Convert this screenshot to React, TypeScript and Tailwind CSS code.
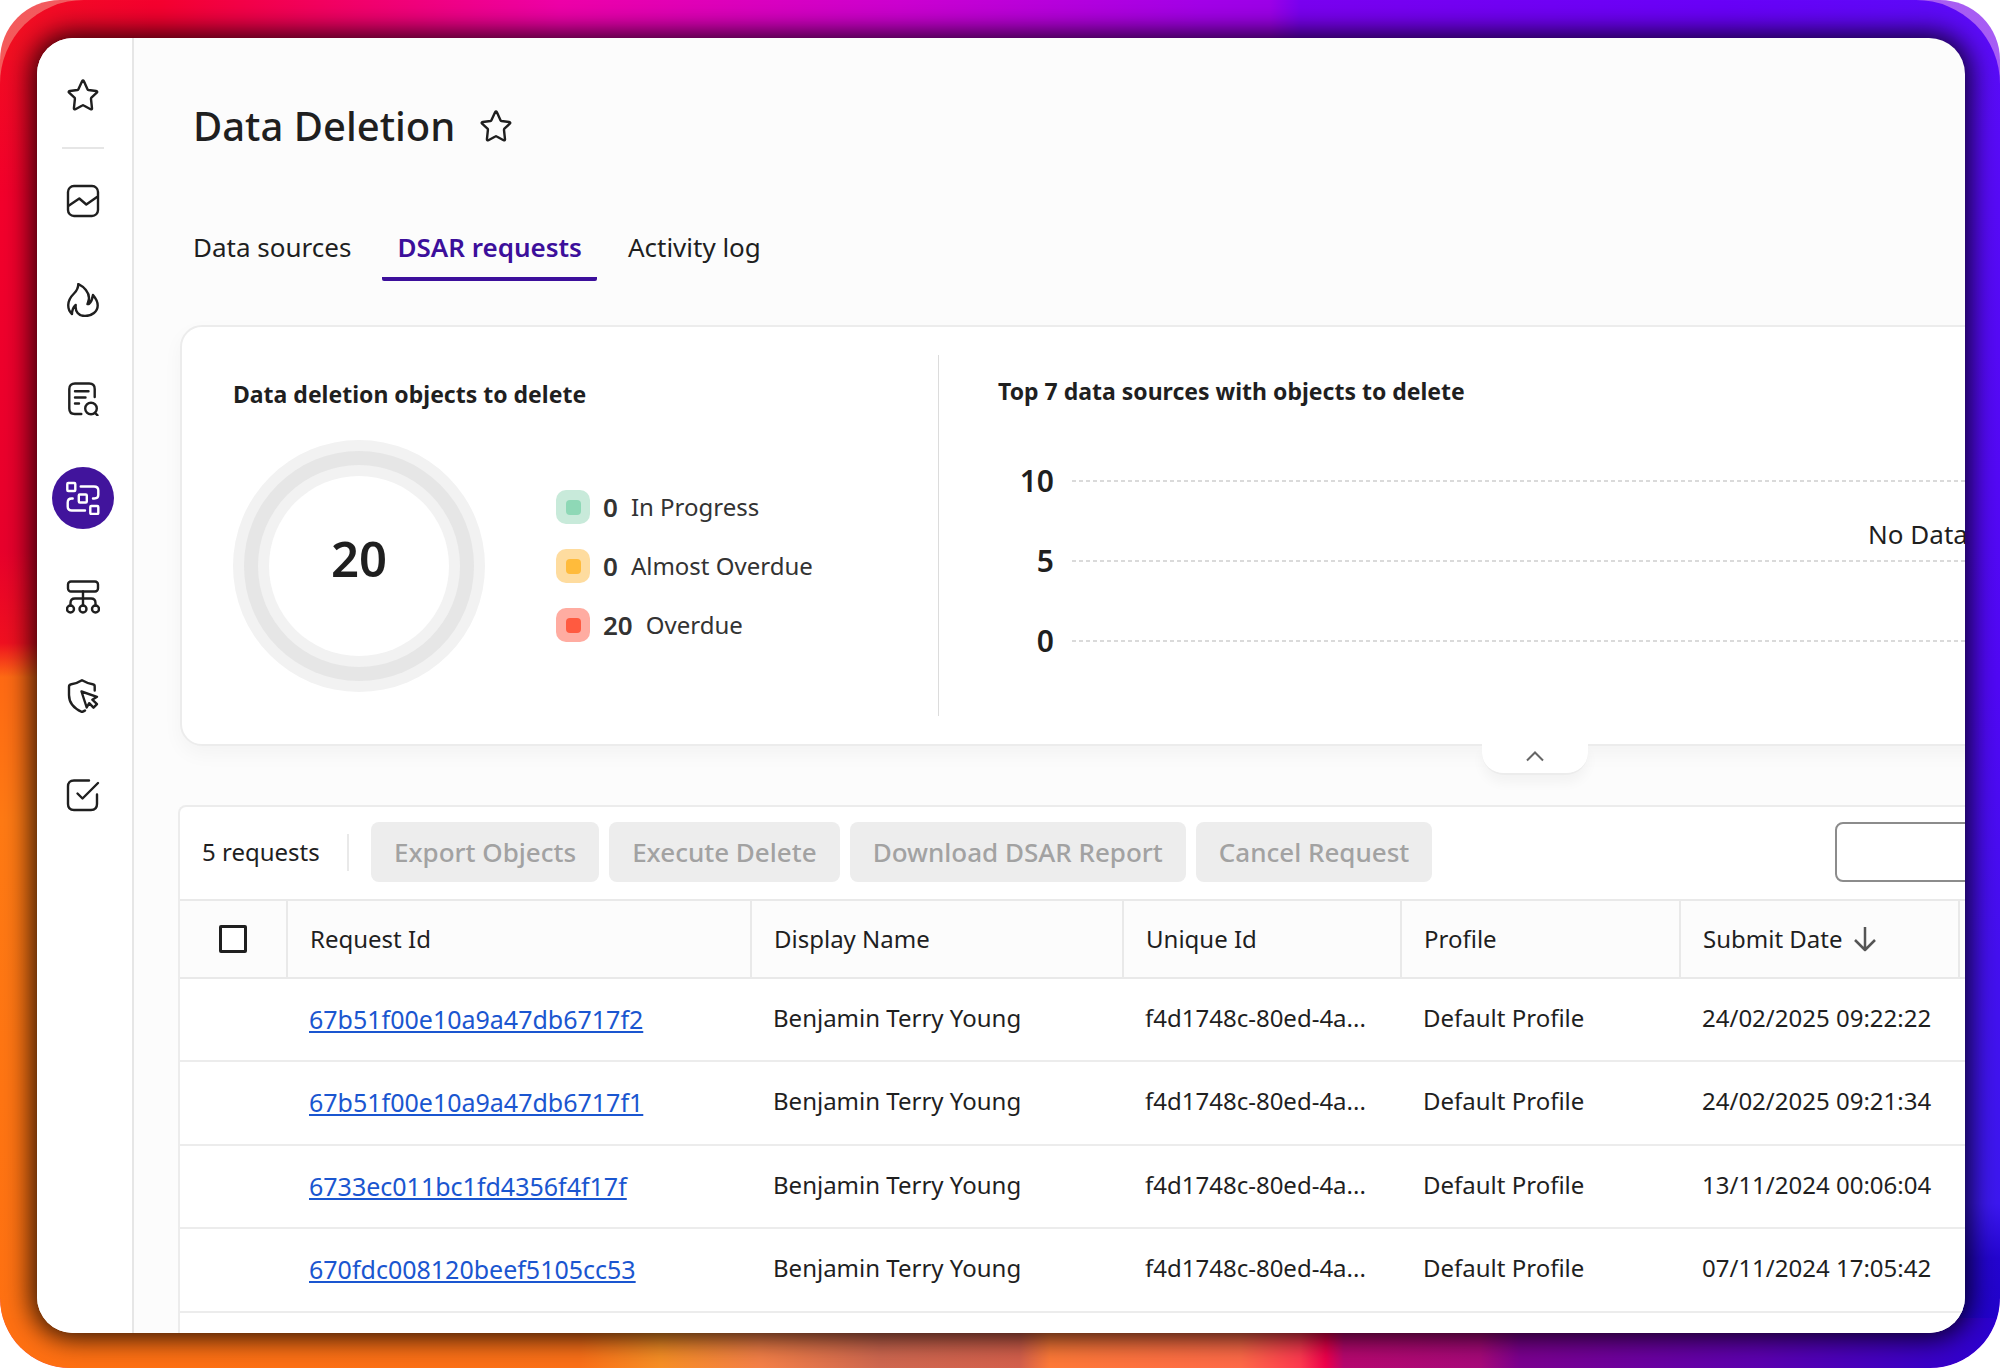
import React from "react";

type IconProps = { children: React.ReactNode; className?: string };

function Glyph({ children, className = "size-[34px]" }: IconProps) {
  return (
    <svg
      viewBox="0 0 34 34"
      className={className}
      fill="none"
      stroke="currentColor"
      strokeWidth="2.4"
      strokeLinecap="round"
      strokeLinejoin="round"
      aria-hidden="true"
    >
      {children}
    </svg>
  );
}

function StarIcon() {
  return (
    <Glyph>
      <path d="M17.8 3c-.5-.9-1.100-.9-1.600 0L12.400 11.200c-.2.5-.5.7-1 .8L3.800 13c-1.200.2-1.500.9-.7 1.700l5.400 5c.4.4.5.8.4 1.300l-1 9.300c0 1 .6 1.300 1.500.9l6.900-3.700c.5-.3.9-.3 1.400 0l6.900 3.700c.9.4 1.500 0 1.400-.9l-1-9.300c0-.5 0-.9.4-1.300l5.400-5c.8-.8.5-1.500-.7-1.700l-7.600-1c-.5-.1-.8-.3-1-.8z" />
    </Glyph>
  );
}

function ChartIcon() {
  return (
    <Glyph>
      <rect x="2" y="2" width="30" height="30" rx="6" />
      <path d="M3 21.5 13.3 14.5l7 6L31 13" />
    </Glyph>
  );
}

function FlameIcon() {
  return (
    <Glyph>
      <path d="M12.3 1c6 3 10.7 8.500 10.7 14 0 2.3-1 4-1.500 6h1.500c2.500-2.500 3.500-5 4-9 3 3.500 4.700 6.500 4.700 10.500 0 6-5.700 10.500-12.700 10.500-6.500 0-10-4.500-9.300-11C7.500 24 6 27 6 31c-3-2.700-4-5.500-3.700-9.500.2-4.500 2.700-8 5.700-11 2.500-2.500 4.300-5.500 4.300-9.500z" />
    </Glyph>
  );
}

function ReportSearchIcon() {
  return (
    <Glyph>
      <path d="M28.7 15V7c0-3.500-2-5.500-5.500-5.500H9C5.500 1.500 3.300 3.500 3.300 7v19.500c0 3.500 2 5.500 5.500 5.500h6.500" />
      <path d="M9 9.300h13.500M9 15.500h10.500M9 21.500h4" />
      <circle cx="25" cy="26.5" r="5.8" />
      <path d="m29 30.8 2.500 2.500" />
    </Glyph>
  );
}

function DataFlowIcon() {
  return (
    <Glyph>
      <rect x="1.3" y="2" width="8" height="8" rx="1" />
      <rect x="12.8" y="13.5" width="8" height="8" rx="1" />
      <rect x="24.3" y="25" width="8" height="8" rx="1" />
      <path d="M14.7 5.500H28c3 0 4.300 1.300 4.300 4v4.300c0 2.500-1.300 3.700-4 3.700H27M6.700 17.500h-1c-2.700 0-4 1.300-4 4v4c0 2.700 1.300 4 4 4H19" />
    </Glyph>
  );
}

function HierarchyIcon() {
  return (
    <Glyph>
      <rect x="2" y="1.5" width="30" height="10" rx="3" />
      <path d="M17 11.500v14M4.500 25.500V23c0-3 1.500-4.500 4.500-4.500h16c3 0 4.500 1.500 4.500 4.500v2.500" />
      <circle cx="4.5" cy="29" r="3.5" />
      <circle cx="17" cy="29" r="3.5" />
      <circle cx="29.5" cy="29" r="3.5" />
    </Glyph>
  );
}

function ShieldCursorIcon() {
  return (
    <Glyph>
      <path d="M28.7 11.500V7.500c0-1.500-.7-2-2-2.200C22.500 4.800 19.500 3.300 16 1.300 12.500 3.500 9 4.800 5.300 5.300c-1.500.2-2.300 1-2.300 2.500V16c0 7.500 5 13.500 13 17 1.200-.4 2-.9 3-1.500" />
      <path d="M15.500 12.500 31 17.800l-4.700 2.900 4.700 4.500-3.500 3.500-4.300-4.500-2.500 4.300z" />
    </Glyph>
  );
}

function TaskIcon() {
  return (
    <Glyph>
      <path d="M23 2.500H8c-4 0-6 2-6 6V26c0 4 2 6 6 6h17c4 0 6-2 6-6V16.500" />
      <path d="m11.500 15.500 5 5L32 5" />
    </Glyph>
  );
}

const navItems = [
  { label: "Dashboards", icon: <ChartIcon /> },
  { label: "Hot topics", icon: <FlameIcon /> },
  { label: "Reports", icon: <ReportSearchIcon /> },
  { label: "Data management", icon: <DataFlowIcon />, active: true },
  { label: "Structure", icon: <HierarchyIcon /> },
  { label: "Privacy", icon: <ShieldCursorIcon /> },
  { label: "Tasks", icon: <TaskIcon /> },
];

function Sidebar() {
  return (
    <nav className="flex w-[97px] shrink-0 flex-col items-center border-r-2 border-[#e6e6e6] bg-white pt-10 pr-1">
      <button type="button" aria-label="Favorites">
        <StarIcon />
      </button>
      <hr className="mt-[35px] w-[42px] border-t-2 border-[#e6e6e6]" />
      <ul className="mt-[21px] flex flex-col gap-[37px]">
        {navItems.map((item) => (
          <li key={item.label}>
            <a
              href="#"
              aria-label={item.label}
              className={
                item.active
                  ? "flex size-[62px] items-center justify-center rounded-full bg-[#41149c] text-white"
                  : "flex size-[62px] items-center justify-center"
              }
            >
              {item.icon}
            </a>
          </li>
        ))}
      </ul>
    </nav>
  );
}

function Tabs() {
  const tab = "border-b-4 border-transparent px-[15px] pb-2.5 text-[26px] leading-10";
  return (
    <div role="tablist" className="mt-[75px] flex gap-4">
      <button type="button" role="tab" aria-selected="false" className={tab}>
        Data sources
      </button>
      <button
        type="button"
        role="tab"
        aria-selected="true"
        className="rounded-b-xs border-b-4 border-[#3c0f9b] px-[15px] pb-2.5 text-[26px] leading-10 font-semibold text-[#3c0f9b]"
      >
        DSAR requests
      </button>
      <button type="button" role="tab" aria-selected="false" className={tab}>
        Activity log
      </button>
    </div>
  );
}

const legend = [
  { count: 0, label: "In Progress", outer: "bg-[#c8eada]", inner: "bg-[#8ed8b6]" },
  { count: 0, label: "Almost Overdue", outer: "bg-[#fedc9f]", inner: "bg-[#ffbb3b]" },
  { count: 20, label: "Overdue", outer: "bg-[#ffaca1]", inner: "bg-[#ff5a40]" },
];

function SummaryCard() {
  return (
    <section className="relative ml-0.5 flex h-[421px] rounded-[22px] border-2 border-[#ececec] bg-white py-7 shadow-[0_8px_20px_rgba(0,0,0,0.04)]">
      <div className="w-[757px] border-r border-[#dcdcdc] pl-[51px]">
        <h2 className="mt-[23px] text-[23px] leading-8 font-bold">Data deletion objects to delete</h2>
        <div className="mt-[30px] flex items-center gap-[71px]">
          <div className="flex size-[252px] items-center justify-center rounded-full bg-[#f2f2f2]">
            <div className="flex size-[230px] items-center justify-center rounded-full bg-[#e6e6e6]">
              <div className="flex size-[202px] items-center justify-center rounded-full bg-[#f2f2f2]">
                <div className="flex size-[180px] items-center justify-center rounded-full bg-white pb-4 text-[49px] leading-none font-semibold">
                  20
                </div>
              </div>
            </div>
          </div>
          <ul className="flex flex-col gap-[25px] text-[#333]">
            {legend.map((item) => (
              <li key={item.label} className="flex h-[34px] items-center text-[24px] leading-none">
                <span className={`flex size-[34px] items-center justify-center rounded-[10px] ${item.outer}`}>
                  <span className={`size-[15px] rounded-sm ${item.inner}`} />
                </span>
                <b className="ml-[13px] text-[26px] font-semibold">{item.count}</b>
                <span className="ml-[13px]">{item.label}</span>
              </li>
            ))}
          </ul>
        </div>
      </div>
      <div className="flex-1 pr-[50px] pl-[59px]">
        <h2 className="mt-5 text-[23px] leading-8 font-bold">Top 7 data sources with objects to delete</h2>
        <div className="relative mt-[54px] flex flex-col gap-10">
          {[10, 5, 0].map((tick) => (
            <div key={tick} className="flex h-10 items-center gap-[18px]">
              <span className="w-14 text-right text-[30px] leading-none font-semibold">{tick}</span>
              <span className="h-0.5 flex-1 bg-[repeating-linear-gradient(to_right,#dadada_0_4px,transparent_4px_7px)]" />
            </div>
          ))}
          <p className="absolute inset-x-0 top-[53px] text-center text-[26px] leading-10">No Data</p>
        </div>
      </div>
      <button
        type="button"
        aria-label="Collapse summary"
        className="absolute top-full left-1/2 flex h-[31px] w-[106px] -translate-x-1/2 items-center justify-center rounded-b-[22px] border-b-2 border-[#ececec] bg-white pb-1.5 text-[#666] shadow-[0_8px_12px_rgba(0,0,0,0.04)]"
      >
        <svg viewBox="0 0 20 12" className="h-3 w-5" fill="none" stroke="currentColor" strokeWidth="2">
          <path d="m2 10.500 8-8 8 8" />
        </svg>
      </button>
    </section>
  );
}

const actions = ["Export Objects", "Execute Delete", "Download DSAR Report", "Cancel Request"];

const rows = [
  { id: "67b51f00e10a9a47db6717f2", date: "24/02/2025 09:22:22" },
  { id: "67b51f00e10a9a47db6717f1", date: "24/02/2025 09:21:34" },
  { id: "6733ec011bc1fd4356f4f17f", date: "13/11/2024 00:06:04" },
  { id: "670fdc008120beef5105cc53", date: "07/11/2024 17:05:42" },
];

function RequestsTable() {
  const head = "border-r-2 border-[#e9e9e9] pl-[22px] text-left font-normal";
  const cell = "truncate pr-4 pb-1 pl-[22px]";
  return (
    <section className="mt-[59px] rounded-t-lg border-2 border-b-0 border-[#ececec] bg-white">
      <div className="flex items-center pt-[15px] pb-[17px] pl-[22px]">
        <span className="w-[145px] shrink-0 text-[24px]">5 requests</span>
        <span className="mr-[22px] h-[37px] w-0.5 shrink-0 bg-[#e9e9e9]" />
        <div className="flex shrink-0 gap-2.5">
          {actions.map((label) => (
            <button
              key={label}
              type="button"
              disabled
              className="h-[60px] rounded-lg bg-[#ededed] px-[23px] text-[26px] font-medium text-[#a2a2a2]"
            >
              {label}
            </button>
          ))}
        </div>
        <input
          type="search"
          aria-label="Search requests"
          className="mr-6 ml-auto h-[60px] w-[1029px] rounded-lg border-2 border-[#8c8c8c] bg-white px-4 text-[24px]"
        />
      </div>
      <table className="w-full table-fixed border-t-2 border-[#e9e9e9] text-[24px]">
        <colgroup>
          <col className="w-[107px]" />
          <col className="w-[464px]" />
          <col className="w-[372px]" />
          <col className="w-[278px]" />
          <col className="w-[279px]" />
          <col className="w-[279px]" />
          <col />
        </colgroup>
        <thead>
          <tr className="h-[78px] border-b-2 border-[#e9e9e9] bg-[#fcfcfc]">
            <th className="border-r-2 border-[#e9e9e9]">
              <input
                type="checkbox"
                aria-label="Select all requests"
                className="mx-auto block size-7 appearance-none rounded-xs border-3 border-[#1f1f1f] bg-white"
              />
            </th>
            <th className={head}>Request Id</th>
            <th className={head}>Display Name</th>
            <th className={head}>Unique Id</th>
            <th className={head}>Profile</th>
            <th className={head}>
              <span className="flex items-center gap-2.5">
                Submit Date
                <svg
                  viewBox="0 0 24 26"
                  className="h-[26px] w-6 text-[#555]"
                  fill="none"
                  stroke="currentColor"
                  strokeWidth="2.5"
                  strokeLinejoin="round"
                >
                  <path d="M12 1v22M2 14l10 10 10-10" />
                </svg>
              </span>
            </th>
            <th />
          </tr>
        </thead>
        <tbody>
          {rows.map((row) => (
            <tr key={row.id} className="h-[83px] border-b-2 border-[#ececec] even:h-[84px]">
              <td />
              <td className="pl-[22px]">
                <a href="#" className="text-[25px] text-[#1a56d0] underline decoration-2 underline-offset-2">
                  {row.id}
                </a>
              </td>
              <td className={cell}>Benjamin Terry Young</td>
              <td className={cell}>f4d1748c-80ed-4a...</td>
              <td className={cell}>Default Profile</td>
              <td className={cell}>{row.date}</td>
              <td />
            </tr>
          ))}
          <tr className="h-[83px]">
            <td colSpan={7} />
          </tr>
        </tbody>
      </table>
    </section>
  );
}

export default function App() {
  return (
    <div className="h-screen overflow-hidden rounded-t-[60px] rounded-b-[70px] bg-linear-to-r from-[#f45a5a] to-[#a65cf5]">
      <div className="h-full overflow-hidden rounded-t-[84px] rounded-b-[70px] pt-[38px] pr-[35px] pb-[35px] pl-[37px] [background:linear-gradient(to_right,#f21020_0%,#f5002f_8%,#f3005f_16%,#ee00a8_28%,#cc00d0_45%,#a300e8_60%,#9c00e8_63.5%,#7a00f0_65%,#6a00f8_85%,#5a0cf8_100%)_top/100%_60px_no-repeat,linear-gradient(to_right,#ff7012_0%,#fb7018_29%,#f88f25_33%,#f58048_38%,#d06850_44%,#d5604c_51%,#ff7a38_52.5%,#ff6a48_62%,#ff3a50_65%,#f0004c_66.3%,#b80870_67.2%,#a8097a_74%,#7c0090_76%,#5c00b0_88%,#3800c8_97%,#2a00d0_100%)_bottom/100%_50px_no-repeat,linear-gradient(to_bottom,#f21020_0%,#f3002c_15%,#e8002c_40%,#f01020_47%,#ff6a14_49.5%,#ff7a14_60%,#ff7012_100%)_left/50%_100%_no-repeat,linear-gradient(to_bottom,#5a0cf8_0%,#5008f5_50%,#4410f0_70%,#3c18f0_88%,#2405d0_92%,#2000c8_100%)_right/50%_100%_no-repeat]">
        <div className="flex h-full overflow-hidden rounded-[36px] bg-[#fcfcfc] font-['Noto_Sans','Open_Sans',sans-serif] text-[#1f1f1f] shadow-[0_0_26px_6px_rgba(0,0,0,0.8)]">
          <Sidebar />
          <main className="min-w-0 flex-1 overflow-hidden pt-[62px] pl-11">
            <header className="flex items-center gap-6 pl-[15px]">
              <h1 className="text-[40px] leading-[52px] font-medium">Data Deletion</h1>
              <button type="button" aria-label="Add to favorites">
                <StarIcon />
              </button>
            </header>
            <Tabs />
            <div className="mt-11 w-[2712px]">
              <SummaryCard />
              <RequestsTable />
            </div>
          </main>
        </div>
      </div>
    </div>
  );
}
